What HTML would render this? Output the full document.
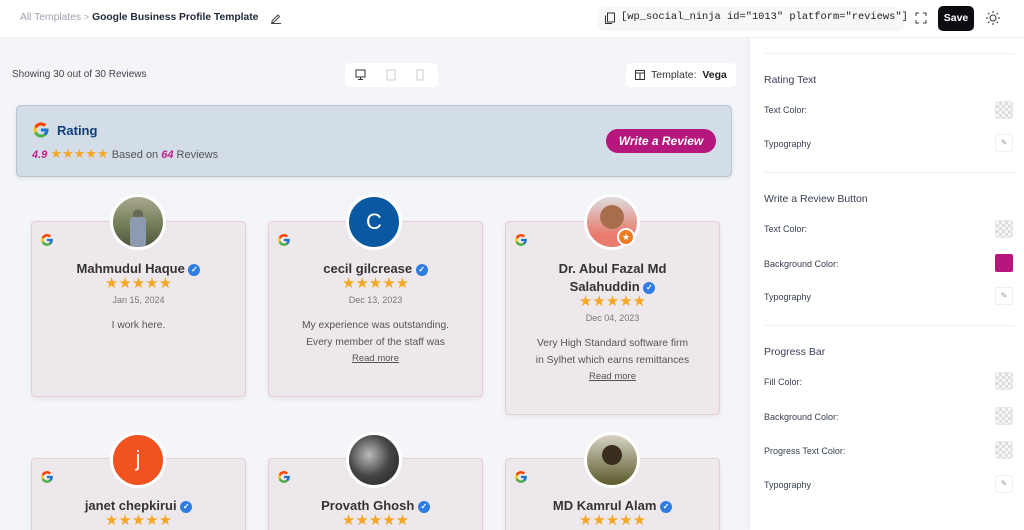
<!DOCTYPE html>
<html style="width:1024px;height:530px;overflow:hidden"><head><meta charset="utf-8">
<style>
*{box-sizing:border-box;margin:0;padding:0}
body{width:1024px;height:530px;overflow:hidden;font-family:"Liberation Sans",sans-serif;background:#f3f5f8;position:relative;color:#1f2937}
.a{position:absolute}
.top{left:0;top:0;width:1024px;height:38px;background:#fff;border-bottom:1px solid #eceef2}
.side{left:750px;top:38px;width:274px;height:492px;background:#fff;box-shadow:-2px 0 4px rgba(0,0,0,.03)}
.lbl{font-size:9px;color:#374151}
.h{font-size:10.5px;color:#374151}
.sw{width:18px;height:18px;border:1px solid #e5e7eb;border-radius:3px;background:repeating-conic-gradient(#ddd 0 25%,#f7f7f7 0 50%) 0 0/6px 6px}
.ed{width:18px;height:18px;border:1px solid #f0f0f0;border-radius:3px;font-size:8px;color:#999;text-align:center;line-height:16px}
.hr{height:1px;background:#eef0f3;left:764px;width:250px}
.card{background:#ede8ec;border:1.5px solid #e8cdd4;border-radius:4px;box-shadow:0 2px 6px rgba(0,0,0,.06)}
.av{width:56px;height:56px;border-radius:50%;border:3px solid #fff;overflow:hidden}
.nm{font-size:13px;font-weight:bold;color:#333;text-align:center;width:215px}
.st{color:#f5a623;font-size:15px;text-align:center;width:215px;line-height:16px}
.dt{font-size:9px;color:#777;text-align:center;width:215px}
.tx{font-size:10.3px;color:#555;text-align:center;width:215px;line-height:16.5px}
.rm{text-decoration:underline}
.vf{display:inline-block;width:12px;height:12px;border-radius:50%;background:#2f7de1;color:#fff;font-size:8px;line-height:12px;text-align:center;vertical-align:1px}
</style></head><body>
<div class="a top"></div>
<div class="a" style="left:20px;top:12px;font-size:10.3px;color:#9ca3af;white-space:nowrap">All Templates <span style="font-size:9px">&gt;</span> <span style="color:#1f2937;font-weight:bold">Google Business Profile Template</span></div>
<svg class="a" style="left:270px;top:12px" width="12" height="12" viewBox="0 0 12 12"><path d="M2 9L8 3l1.5 1.5-6 6H2z M1 11.5h10" stroke="#444" fill="none" stroke-width="1"/></svg>
<div class="a" style="left:598px;top:7px;width:306px;height:24px;background:#f6f7f9;border-radius:6px"></div>
<svg class="a" style="left:604px;top:12px" width="12" height="13" viewBox="0 0 12 13"><rect x="3.5" y="1" width="7" height="9" fill="none" stroke="#333"/><path d="M1.5 3.5v8h6.5" fill="none" stroke="#333"/></svg>
<div class="a" style="left:621px;top:11px;font-family:'Liberation Mono',monospace;font-size:10.4px;color:#222;white-space:nowrap">[wp_social_ninja id="1013" platform="reviews"]</div>
<svg class="a" style="left:915px;top:12px" width="12" height="12" viewBox="0 0 12 12"><path d="M1 4V1h3M8 1h3v3M11 8v3H8M4 11H1V8" fill="none" stroke="#333"/></svg>
<div class="a" style="left:938px;top:6px;width:36px;height:25px;background:#0b0d12;border-radius:5px;color:#fff;font-size:10.5px;font-weight:bold;text-align:center;line-height:25px">Save</div>
<svg class="a" style="left:986px;top:11px" width="14" height="14" viewBox="0 0 14 14"><circle cx="7" cy="7" r="3" fill="none" stroke="#333"/><path d="M7 0v2M7 12v2M0 7h2M12 7h2M2 2l1.4 1.4M10.6 10.6L12 12M2 12l1.4-1.4M10.6 3.4L12 2" stroke="#333"/></svg>

<div class="a" style="left:12px;top:69px;font-size:10px;color:#444">Showing 30 out of 30 Reviews</div>
<div class="a" style="left:345px;top:63px;width:93px;height:24px;background:#fff;border-radius:5px"></div>
<svg class="a" style="left:355px;top:69px" width="72" height="12" viewBox="0 0 72 12"><rect x="1" y="1" width="9" height="7" fill="none" stroke="#333"/><path d="M5.5 8v2M3 10.5h5" stroke="#333"/><rect x="32" y="1" width="8" height="10" fill="none" stroke="#ccc"/><rect x="62" y="1" width="6" height="10" fill="none" stroke="#ccc"/></svg>
<div class="a" style="left:626px;top:63px;width:110px;height:24px;background:#fff;border-radius:5px"></div>
<svg class="a" style="left:635px;top:70px" width="10" height="10" viewBox="0 0 10 10"><rect x=".5" y=".5" width="9" height="9" fill="none" stroke="#333"/><path d="M.5 3h9M5 3v6.5" stroke="#333"/></svg>
<div class="a" style="left:651px;top:69px;font-size:10.5px;color:#333">Template:&nbsp; <b style="color:#222">Vega</b></div>

<svg width="0" height="0" style="position:absolute"><defs><g id="g"><path fill="#FFC107" d="M43.6 20H24v8h11.3C33.7 33 29.3 36 24 36c-6.6 0-12-5.4-12-12s5.4-12 12-12c3 0 5.8 1.1 7.9 3l5.7-5.7C34 6 29.3 4 24 4 13 4 4 13 4 24s9 20 20 20 20-9 20-20c0-1.3-.1-2.7-.4-4z"/><path fill="#FF3D00" d="M6.3 14.7l6.6 4.8C14.7 15.1 19 12 24 12c3 0 5.8 1.1 7.9 3l5.7-5.7C34 6 29.3 4 24 4 16.3 4 9.7 8.3 6.3 14.7z"/><path fill="#4CAF50" d="M24 44c5.2 0 9.9-2 13.4-5.2l-6.2-5.2C29.2 35.1 26.7 36 24 36c-5.2 0-9.6-3.3-11.3-8l-6.5 5C9.5 39.6 16.2 44 24 44z"/><path fill="#1976D2" d="M43.6 20H24v8h11.3c-.8 2.2-2.2 4.2-4.1 5.6l6.2 5.2C37 39.2 44 34 44 24c0-1.3-.1-2.7-.4-4z"/></g></defs></svg>

<div class="a" style="left:16px;top:105px;width:716px;height:72px;background:#d3dde7;border:1.5px solid #b9c3cd;border-radius:5px;box-shadow:0 2px 4px rgba(0,0,0,.08)"></div>
<svg class="a" style="left:32px;top:121px" width="18" height="18" viewBox="0 0 48 48"><use href="#g"/></svg>
<div class="a" style="left:57px;top:123px;font-size:13px;font-weight:bold;color:#0e3f7c">Rating</div>
<div class="a" style="left:32px;top:146px;font-size:11px;color:#555;white-space:nowrap"><b style="color:#c3228a;font-style:italic">4.9</b> <span style="color:#f5a623;font-size:13px">★★★★★</span> Based on <b style="color:#c3228a;font-style:italic">64</b> Reviews</div>
<div class="a" style="left:606px;top:129px;width:110px;height:24px;background:#b5177c;border-radius:12px;color:#fff;font-size:12px;font-weight:bold;font-style:italic;text-align:center;line-height:24px">Write a Review</div>

<div class="a card" style="left:31px;top:221px;width:215px;height:176px"></div>
<div class="a card" style="left:268px;top:221px;width:215px;height:176px"></div>
<div class="a card" style="left:505px;top:221px;width:215px;height:194px"></div>
<div class="a av" style="left:110px;top:194px;background:radial-gradient(circle at 50% 35%,#6a6a58 0 12%,transparent 13%),linear-gradient(180deg,#a9a88f,#6f7a55 60%,#4e5440)"><div style="margin:20px auto 0;width:16px;height:30px;background:#8d9bb0;border-radius:4px"></div></div>
<div class="a av" style="left:346px;top:194px;background:#0a58a2;color:#fff;font-size:22px;text-align:center;line-height:50px">C</div>
<div class="a av" style="left:584px;top:194px;background:radial-gradient(circle at 50% 40%,#a86d4c 0 30%,transparent 31%),linear-gradient(180deg,#ddd,#e87a6e 75%)"></div>
<div class="a" style="left:617px;top:228px;width:18px;height:18px;border-radius:50%;background:#ee7b22;border:2px solid #fff;color:#fff;font-size:9px;text-align:center;line-height:14px">★</div>

<svg class="a" style="left:40px;top:233px" width="14" height="14" viewBox="0 0 48 48"><use href="#g"/></svg>
<svg class="a" style="left:277px;top:233px" width="14" height="14" viewBox="0 0 48 48"><use href="#g"/></svg>
<svg class="a" style="left:514px;top:233px" width="14" height="14" viewBox="0 0 48 48"><use href="#g"/></svg>

<div class="a nm" style="left:31px;top:261px">Mahmudul Haque <span class="vf">✓</span></div>
<div class="a st" style="left:31px;top:276px">★★★★★</div>
<div class="a dt" style="left:31px;top:295px">Jan 15, 2024</div>
<div class="a tx" style="left:31px;top:318px">I work here.</div>

<div class="a nm" style="left:268px;top:261px">cecil gilcrease <span class="vf">✓</span></div>
<div class="a st" style="left:268px;top:276px">★★★★★</div>
<div class="a dt" style="left:268px;top:295px">Dec 13, 2023</div>
<div class="a tx" style="left:268px;top:318px">My experience was outstanding.<br>Every member of the staff was<br><span class="rm" style="font-size:9.5px">Read more</span></div>

<div class="a nm" style="left:505px;top:260px;line-height:18px">Dr. Abul Fazal Md<br>Salahuddin <span class="vf">✓</span></div>
<div class="a st" style="left:505px;top:294px">★★★★★</div>
<div class="a dt" style="left:505px;top:313px">Dec 04, 2023</div>
<div class="a tx" style="left:505px;top:336px">Very High Standard software firm<br>in Sylhet which earns remittances<br><span class="rm" style="font-size:9.5px">Read more</span></div>

<div class="a card" style="left:31px;top:458px;width:215px;height:90px"></div>
<div class="a card" style="left:268px;top:458px;width:215px;height:90px"></div>
<div class="a card" style="left:505px;top:458px;width:215px;height:90px"></div>
<div class="a av" style="left:110px;top:432px;background:#f1521f;color:#fff;font-size:22px;text-align:center;line-height:48px">j</div>
<div class="a av" style="left:346px;top:432px;background:radial-gradient(circle at 40% 40%,#bbb,#444 50%,#222)"></div>
<div class="a av" style="left:584px;top:432px;background:radial-gradient(circle at 50% 40%,#3a2f1e 0 25%,transparent 26%),linear-gradient(180deg,#d7d3c6,#5a5a2a)"></div>
<svg class="a" style="left:40px;top:470px" width="14" height="14" viewBox="0 0 48 48"><use href="#g"/></svg>
<svg class="a" style="left:277px;top:470px" width="14" height="14" viewBox="0 0 48 48"><use href="#g"/></svg>
<svg class="a" style="left:514px;top:470px" width="14" height="14" viewBox="0 0 48 48"><use href="#g"/></svg>
<div class="a nm" style="left:31px;top:498px">janet chepkirui <span class="vf">✓</span></div>
<div class="a nm" style="left:268px;top:498px">Provath Ghosh <span class="vf">✓</span></div>
<div class="a nm" style="left:505px;top:498px">MD Kamrul Alam <span class="vf">✓</span></div>
<div class="a st" style="left:31px;top:513px">★★★★★</div>
<div class="a st" style="left:268px;top:513px">★★★★★</div>
<div class="a st" style="left:505px;top:513px">★★★★★</div>

<div class="a side"></div>
<div class="a hr" style="top:53px"></div>
<div class="a h" style="left:764px;top:74px">Rating Text</div>
<div class="a lbl" style="left:764px;top:105px">Text Color:</div>
<div class="a sw" style="left:995px;top:101px"></div>
<div class="a lbl" style="left:764px;top:139px">Typography</div>
<div class="a ed" style="left:995px;top:134px">✎</div>
<div class="a hr" style="top:172px"></div>
<div class="a h" style="left:764px;top:193px">Write a Review Button</div>
<div class="a lbl" style="left:764px;top:224px">Text Color:</div>
<div class="a sw" style="left:995px;top:220px"></div>
<div class="a lbl" style="left:764px;top:259px">Background Color:</div>
<div class="a" style="left:995px;top:254px;width:18px;height:18px;background:#b5177c;border-radius:2px"></div>
<div class="a lbl" style="left:764px;top:292px">Typography</div>
<div class="a ed" style="left:995px;top:287px">✎</div>
<div class="a hr" style="top:325px"></div>
<div class="a h" style="left:764px;top:346px">Progress Bar</div>
<div class="a lbl" style="left:764px;top:377px">Fill Color:</div>
<div class="a sw" style="left:995px;top:372px"></div>
<div class="a lbl" style="left:764px;top:412px">Background Color:</div>
<div class="a sw" style="left:995px;top:407px"></div>
<div class="a lbl" style="left:764px;top:446px">Progress Text Color:</div>
<div class="a sw" style="left:995px;top:441px"></div>
<div class="a lbl" style="left:764px;top:480px">Typography</div>
<div class="a ed" style="left:995px;top:475px">✎</div>
</body></html>
